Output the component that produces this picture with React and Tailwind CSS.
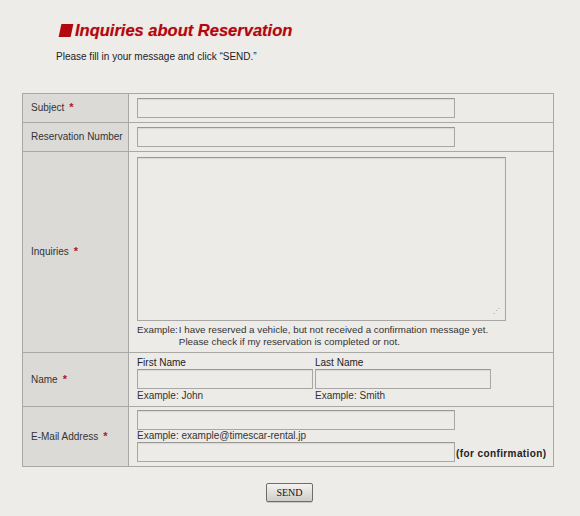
import React from 'react';

const font = { fontFamily: '"Liberation Sans", Arial, sans-serif' };

function Req() {
  return <span className="ml-[5px] text-[#b0162a] font-bold text-[11px]">*</span>;
}

function Field({ w = 'w-[318px]', h = 'h-[20px]' }) {
  return (
    <div className={`${w} ${h} shrink-0 border border-[#a9a7a4] border-t-[#9a9895] bg-[#edebe8] shadow-[inset_0_1px_1px_rgba(0,0,0,0.08)]`} />
  );
}

export default function App() {
  return (
    <div className="min-h-[516px] w-[580px] bg-[#eeece9] text-[#333] text-[10px]" style={font}>
      <div className="pl-[60px] pt-[22px]">
        <h1 className="flex items-center text-[16.5px] font-bold italic leading-none text-[#b3070f] [text-shadow:0_0_1px_rgba(180,0,0,0.4)]">
          <span className="mr-[3px] inline-block h-[13px] w-[12px] -skew-x-12 bg-[#b3070f]" />
          Inquiries about Reservation
        </h1>
      </div>
      <p className="mt-[10px] pl-[56px] text-[10px] text-[#222]">Please fill in your message and click “SEND.”</p>

      <table className="ml-[22px] mt-[29px] w-[532px] border-collapse border border-[#aaa8a5]">
        <tbody>
          <tr className="h-[29px]">
            <th className="w-[106px] border border-[#aaa8a5] bg-[#dcdad7] pl-[8px] text-left font-normal">Subject<Req /></th>
            <td className="border border-[#aaa8a5] bg-[#edebe8] pl-[8px]"><Field /></td>
          </tr>
          <tr className="h-[29px]">
            <th className="border border-[#aaa8a5] bg-[#dcdad7] pl-[8px] text-left font-normal">Reservation Number</th>
            <td className="border border-[#aaa8a5] bg-[#edebe8] pl-[8px]"><Field /></td>
          </tr>
          <tr className="h-[201px]">
            <th className="border border-[#aaa8a5] bg-[#dcdad7] pl-[8px] text-left font-normal">Inquiries<Req /></th>
            <td className="border border-[#aaa8a5] bg-[#edebe8] pl-[8px] pt-[5px] align-top">
              <div className="relative">
                <Field w="w-[369px]" h="h-[164px]" />
                <span className="absolute left-[356px] top-[150px] text-[7px] leading-none text-[#999]">⋰</span>
              </div>
              <div className="mt-[3px] flex text-[9.8px] leading-[12px] text-[#333]">
                <span>Example:</span>
                <span className="ml-[1px]">I have reserved a vehicle, but not received a confirmation message yet.<br />Please check if my reservation is completed or not.</span>
              </div>
            </td>
          </tr>
          <tr className="h-[54px]">
            <th className="border border-[#aaa8a5] bg-[#dcdad7] pl-[8px] text-left font-normal">Name<Req /></th>
            <td className="border border-[#aaa8a5] bg-[#edebe8] pl-[8px]">
              <div className="flex gap-[2px]">
                <div>
                  <div className="leading-[12px] text-[#222]">First Name</div>
                  <Field w="w-[176px]" />
                  <div className="mt-[1px] leading-[12px]">Example: John</div>
                </div>
                <div>
                  <div className="leading-[12px] text-[#222]">Last Name</div>
                  <Field w="w-[176px]" />
                  <div className="mt-[1px] leading-[12px]">Example: Smith</div>
                </div>
              </div>
            </td>
          </tr>
          <tr className="h-[60px]">
            <th className="border border-[#aaa8a5] bg-[#dcdad7] pl-[8px] text-left font-normal">E-Mail Address<Req /></th>
            <td className="border border-[#aaa8a5] bg-[#edebe8] pl-[8px]">
              <Field />
              <div className="leading-[12px]">Example: example@timescar-rental.jp</div>
              <div className="flex items-end whitespace-nowrap">
                <Field />
                <span className="ml-[1px] mb-[3px] font-bold tracking-[0.4px] leading-none text-[#222]">(for confirmation)</span>
              </div>
            </td>
          </tr>
        </tbody>
      </table>

      <div className="mt-[16px] flex justify-center pr-[1px]">
        <button className="h-[19px] w-[47px] rounded-[2px] border border-[#6f6d6a] bg-gradient-to-b from-[#f4f3f1] to-[#cfcdca] text-[10px] text-[#111] shadow-[0_1px_0_rgba(0,0,0,0.15)]" style={{ fontFamily: '"Liberation Serif", serif' }}>SEND</button>
      </div>
    </div>
  );
}
